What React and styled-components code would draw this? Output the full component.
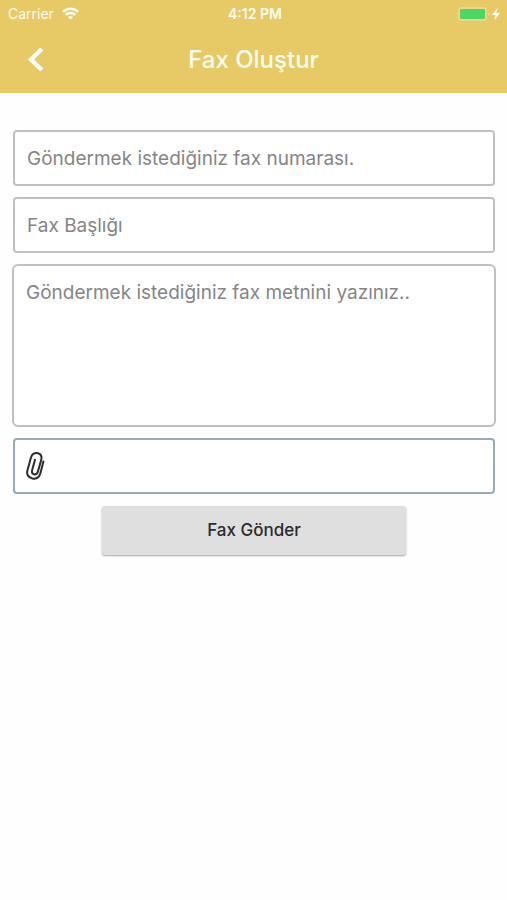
import React from "react";
import styled, { createGlobalStyle, css } from "styled-components";

const GlobalStyle = createGlobalStyle`
  *, *::before, *::after { box-sizing: border-box; }
  body {
    margin: 0;
    background: #fefefe;
    font-family: Inter, "Liberation Sans", sans-serif;
    color: #333;
  }
`;

const TopArea = styled.header`
  background: #e7c965;
  color: #fffdf2;
`;

const StatusBar = styled.div`
  display: grid;
  grid-template-columns: 1fr auto 1fr;
  align-items: center;
  height: 27px;
  padding: 0 5px 0 8px;
  font-size: 14px;
  line-height: 16px;
`;

const Carrier = styled.div`
  display: flex;
  align-items: center;
  gap: 8px;
`;

const Clock = styled.time`
  font-weight: 600;
`;

const Power = styled.div`
  display: flex;
  align-items: center;
  justify-content: flex-end;
`;

const NavBar = styled.div`
  display: grid;
  grid-template-columns: 48px 1fr 48px;
  align-items: center;
  height: 66px;
  padding: 0 12px;
`;

const BackButton = styled.button`
  display: flex;
  align-items: center;
  justify-content: center;
  height: 48px;
  padding: 0;
  border: 0;
  background: none;
  color: #fffefa;
  cursor: pointer;
`;

const Title = styled.h1`
  margin: 0;
  text-align: center;
  font-size: 24px;
  line-height: 32px;
  font-weight: 500;
`;

const Form = styled.form`
  display: flex;
  flex-direction: column;
  gap: 11px;
  padding: 37px 11px 24px 12px;
`;

const box = css`
  border: 2px solid #c0c0c0;
  border-radius: 4px;
  background: #fff;
`;

const fieldText = css`
  font-family: inherit;
  font-size: 19px;
  line-height: 24px;
  color: #333;

  &::placeholder {
    color: #858585;
    opacity: 1;
  }
`;

const TextField = styled.input`
  ${box}
  ${fieldText}
  height: 56px;
  margin: 0 1px;
  padding: 0 12px;
`;

const MessageField = styled.textarea`
  ${box}
  ${fieldText}
  display: block;
  height: 163px;
  padding: 15px 12px;
  border-radius: 6px;
  resize: none;
`;

const AttachField = styled.label`
  ${box}
  display: flex;
  align-items: center;
  height: 56px;
  margin: 0 1px;
  padding: 0 10px;
  border-color: #9aabb2;
  color: #2b2b2b;
  cursor: pointer;
`;

const FileInput = styled.input`
  width: 1px;
  height: 1px;
  opacity: 0;
`;

const SendButton = styled.button`
  align-self: center;
  width: 63%;
  height: 49px;
  margin-top: 1px;
  padding: 0 0 1px;
  border: 0;
  border-radius: 3px;
  background: #dfdfdf;
  box-shadow: 0 1px 2px rgba(0, 0, 0, 0.35);
  font-family: inherit;
  font-size: 17px;
  font-weight: 500;
  color: #2b2b2b;
  cursor: pointer;
`;

const WifiIcon = () => (
  <svg width="17" height="13" viewBox="0 0 17 13" fill="none" stroke="currentColor" strokeWidth="2.5" aria-hidden="true">
    <path d="M1 4.900C5.200.6 11.800.6 16 4.900" />
    <path d="M3.700 7.900c2.700-2.600 6.900-2.600 9.600 0" />
    <path d="M8.500 12.600 5.800 10c1.500-1.400 3.900-1.400 5.400 0Z" fill="currentColor" stroke="none" />
  </svg>
);

const BatteryIcon = () => (
  <svg width="44" height="16" viewBox="0 0 44 16" aria-hidden="true">
    <rect x="1" y="2" width="27" height="12" rx="2.500" fill="none" stroke="#f1dc98" strokeWidth="1.300" />
    <rect x="2" y="3" width="25" height="10" rx="1" fill="#4bd763" />
    <path d="M29.800 6c1.600.5 1.600 3.500 0 4Z" fill="#f4dda0" />
    <path d="M39.400 2 34 9h3.600l-1.200 5.200L42 7h-3.700Z" fill="#fffef8" />
  </svg>
);

const BackIcon = () => (
  <svg width="20" height="28" viewBox="0 0 20 28" fill="none" stroke="currentColor" strokeWidth="4.400" aria-hidden="true">
    <path d="M15.800 3 5 13.500l10.800 10.500" />
  </svg>
);

const ClipIcon = () => (
  <svg width="22" height="30" viewBox="0 0 22 30" fill="none" stroke="currentColor" strokeWidth="2" strokeLinecap="round" strokeLinejoin="round" aria-hidden="true">
    <path d="M18.400 10.500 15.600 21.500C14.400 26.100 11.500 28.400 7.500 27.500 3.200 26.500 1.400 23.600 2.400 19.400L5.900 6.700C7 2.900 10 1.300 13 2.200c3 .9 4.100 3.300 3.200 6.700l-3.200 11.400c-.7 2.400-2.200 3.500-4 3-1.800-.5-2.400-2-1.800-4.300L10 8.800" />
  </svg>
);

export default function App() {
  return (
    <>
      <GlobalStyle />
      <TopArea>
        <StatusBar>
          <Carrier>
            Carrier
            <WifiIcon />
          </Carrier>
          <Clock>4:12 PM</Clock>
          <Power>
            <BatteryIcon />
          </Power>
        </StatusBar>
        <NavBar>
          <BackButton type="button" aria-label="Geri">
            <BackIcon />
          </BackButton>
          <Title>Fax Oluştur</Title>
        </NavBar>
      </TopArea>
      <Form onSubmit={(event) => event.preventDefault()}>
        <TextField
          type="tel"
          aria-label="Fax numarası"
          placeholder="Göndermek istediğiniz fax numarası."
        />
        <TextField type="text" aria-label="Fax Başlığı" placeholder="Fax Başlığı" />
        <MessageField
          aria-label="Fax metni"
          placeholder="Göndermek istediğiniz fax metnini yazınız.."
        />
        <AttachField>
          <ClipIcon />
          <FileInput type="file" aria-label="Dosya ekle" />
        </AttachField>
        <SendButton type="submit">Fax Gönder</SendButton>
      </Form>
    </>
  );
}
